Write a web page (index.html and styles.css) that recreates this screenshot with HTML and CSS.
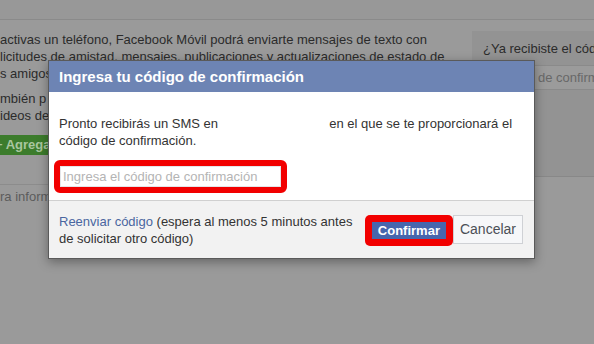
FILE: index.html
```html
<!DOCTYPE html>
<html lang="es">
<head>
<meta charset="utf-8">
<title>Ingresa tu código de confirmación</title>
<link rel="stylesheet" href="styles.css">
</head>
<body>
<div class="page">
  <div class="topbar"></div>
  <div class="content">
    <div class="main">
      <p class="para">activas un teléfono, Facebook Móvil podrá enviarte mensajes de texto con<br>licitudes de amistad, mensajes, publicaciones y actualizaciones de estado de<br>s amigos</p>
      <p class="para para2">mbién p<br>ideos de</p>
      <div class="addbtn">+ Agregar</div>
      <div class="more">ra inform</div>
    </div>
    <aside class="side">
      <div class="side-title">¿Ya recibiste el código?</div>
      <div class="side-input">código de confirmación</div>
    </aside>
  </div>
</div>

<div class="dialog">
  <div class="dlg-head">Ingresa tu código de confirmación</div>
  <div class="dlg-body">
    <p class="dlg-text">Pronto recibirás un SMS en <span class="redact"></span> en el que se te proporcionará el<br>código de confirmación.</p>
    <div class="hl-input"><input class="code" type="text" placeholder="Ingresa el código de confirmación"></div>
  </div>
  <div class="dlg-foot">
    <p class="foot-text"><a class="link" href="#">Reenviar código</a> (espera al menos 5 minutos antes<br>de solicitar otro código)</p>
    <div class="actions">
      <span class="hl-btn"><button class="confirm" type="button">Confirmar</button></span><button class="cancel" type="button">Cancelar</button>
    </div>
  </div>
</div>
</body>
</html>
```

FILE: styles.css
```css
html, body {
  margin: 0;
  padding: 0;
}
body {
  width: 594px;
  height: 344px;
  overflow: hidden;
  position: relative;
  background: #9a9a9a;
  font-family: "Liberation Sans", Arial, sans-serif;
  font-size: 13px;
  color: #2b2b2b;
}

/* dimmed page behind the dialog */
.topbar {
  height: 19px;
  background: #989898;
  border-bottom: 1px solid #8a8a8a;
}
.content {
  display: flex;
  gap: 12px;
  padding-top: 11px;
}
.main {
  width: 460px;
  flex: none;
}
.para {
  margin: 0;
  line-height: 17px;
  white-space: nowrap;
}
.para2 {
  margin-top: 8px;
}
.addbtn {
  display: inline-block;
  margin: 11px 0 0 -5px;
  padding: 0 10px 0 0;
  background: #3c7c2c;
  color: #a9c69f;
  font-weight: bold;
  line-height: 20px;
  white-space: nowrap;
}
.more {
  margin-top: 29px;
  border-top: 1px solid #8c8c8c;
  padding-top: 3px;
  line-height: 17px;
  color: #5c5c5c;
}
.side {
  flex: 1;
  box-sizing: border-box;
  height: 146px;
  background: #939393;
  border-bottom: 1px solid #888;
  padding: 9px 0 0 11px;
}
.side-title {
  line-height: 17px;
  white-space: nowrap;
}
.side-input {
  margin-top: 8px;
  height: 25px;
  box-sizing: border-box;
  background: #9b9b9b;
  border: 1px solid #8a8a8a;
  border-right: none;
  padding-left: 12px;
  line-height: 23px;
  color: #686868;
  white-space: nowrap;
}

/* dialog */
.dialog {
  position: absolute;
  left: 48px;
  top: 60px;
  width: 487px;
  box-sizing: border-box;
  border: 1px solid #5a5a5a;
  background: #fff;
  box-shadow: 0 3px 10px rgba(0, 0, 0, 0.35);
}
.dlg-head {
  background: #6d84b4;
  color: #fff;
  font-size: 15px;
  font-weight: bold;
  line-height: 19px;
  padding: 6px 10px;
}
.dlg-body {
  padding: 23px 10px 7px;
  color: #333;
}
.dlg-text {
  margin: 0;
  line-height: 17px;
  white-space: nowrap;
}
.redact {
  display: inline-block;
  width: 104px;
}
.hl-input {
  margin: 11px 0 0 -5px;
  width: 233px;
  box-sizing: border-box;
  border: 6px solid #f20000;
  border-radius: 6px;
  background: #fff;
}
.code {
  display: block;
  width: 100%;
  box-sizing: border-box;
  height: 21px;
  margin: 0;
  border: 1px solid #e4e5e8;
  padding: 0 2px;
  font-family: "Liberation Sans", Arial, sans-serif;
  font-size: 13px;
  color: #333;
  background: #fff;
}
.code::placeholder {
  color: #b4b4b4;
}
.dlg-foot {
  display: flex;
  justify-content: space-between;
  align-items: flex-start;
  background: #f2f2f2;
  border-top: 1px solid #d0d0d0;
  padding: 12px 11px 11px 10px;
}
.foot-text {
  margin: 0;
  line-height: 17px;
  color: #333;
  white-space: nowrap;
}
.link {
  color: #4a66a0;
  text-decoration: none;
}
.actions {
  display: flex;
  align-items: flex-start;
  margin-top: 2px;
}
.hl-btn {
  display: inline-block;
  background: #f20000;
  padding: 7px;
  border-radius: 5px;
}
.confirm {
  display: block;
  margin: 0;
  border: none;
  padding: 0 6px;
  background: #4766ad;
  color: #fff;
  font-family: "Liberation Sans", Arial, sans-serif;
  font-size: 13px;
  font-weight: bold;
  line-height: 17px;
}
.cancel {
  margin: 0;
  height: 29px;
  box-sizing: border-box;
  border: 1px solid #cfd1d5;
  padding: 0 6px;
  background: #f6f7f9;
  color: #4b4f56;
  font-family: "Liberation Sans", Arial, sans-serif;
  font-size: 14px;
  line-height: 27px;
}
```
